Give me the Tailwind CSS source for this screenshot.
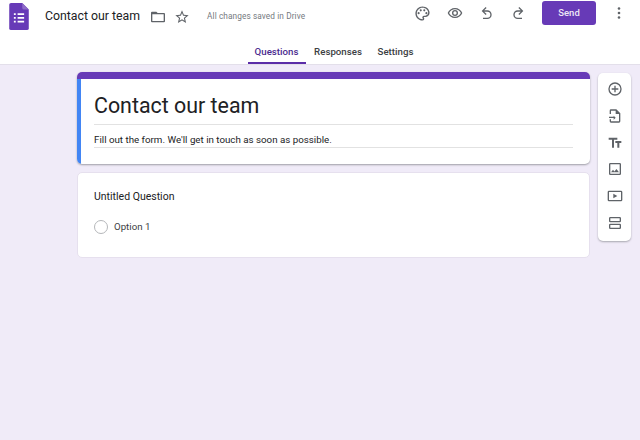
<!DOCTYPE html>
<html lang="en">
<head>
<meta charset="UTF-8">
<title>Contact our team - Google Forms</title>
<script src="https://cdn.jsdelivr.net/npm/@tailwindcss/browser@4"></script>
</head>
<body class="w-[640px] h-[440px] overflow-hidden bg-[#f0ebf8] font-['Roboto',sans-serif] text-[#202124]">
  <!-- top bar -->
  <header class="h-[65px] bg-white border-b border-[#e3dfea] flex flex-col">
    <div class="h-[40px] flex items-start">
      <div class="h-[33px] flex items-center">
        <svg class="ml-[9px] w-[20px] h-[27px]" viewBox="0 0 21 29">
          <path d="M2 0h12l7 7v20a2 2 0 0 1-2 2H2a2 2 0 0 1-2-2V2a2 2 0 0 1 2-2z" fill="#673ab7"/>
          <path d="M14 0l7 7h-5a2 2 0 0 1-2-2z" fill="#8e6cc9"/>
          <path d="M5 11h2v2H5zM9 11h7v2H9zM5 15h2v2H5zM9 15h7v2H9zM5 19h2v2H5zM9 19h7v2H9z" fill="#fff"/>
        </svg>
        <span class="ml-[16px] text-[12.3px] leading-none">Contact our team</span>
        <svg class="ml-[10px] w-[16px] h-[16px]" viewBox="0 0 24 24" fill="#5f6368"><path d="M3 4h6.500l2 2H21a1.500 1.500 0 0 1 1.500 1.500v11A1.500 1.500 0 0 1 21 20H3a1.500 1.500 0 0 1-1.500-1.500v-13A1.500 1.500 0 0 1 3 4zm.500 4v10h17V8h-17z"/></svg>
        <svg class="ml-[8px] w-[16px] h-[16px]" viewBox="0 0 24 24" fill="#5f6368"><path d="M22 9.240l-7.190-.620L12 2 9.190 8.630 2 9.240l5.460 4.730L5.820 21 12 17.270 18.180 21l-1.630-7.030L22 9.240zM12 15.400l-3.760 2.270 1-4.280-3.320-2.880 4.380-.380L12 6.100l1.710 4.040 4.380.380-3.320 2.880 1 4.280L12 15.400z"/></svg>
        <span class="ml-[17px] text-[8.25px] text-[#757a80] tracking-[0.1px]">All changes saved in Drive</span>
      </div>
      <div class="ml-auto h-[26px] flex items-center">
        <svg class="w-[17px] h-[17px]" viewBox="0 0 24 24" fill="#5f6368"><path d="M12 2C6.490 2 2 6.490 2 12s4.490 10 10 10a2.500 2.500 0 0 0 1.850-4.180.5.500 0 0 1 .370-.820H16c3.310 0 6-2.690 6-6 0-4.960-4.490-9-10-9zm4 13h-1.780a2.500 2.500 0 0 0-1.850 4.180.5.500 0 0 1-.370.820c-4.410 0-8-3.590-8-8s3.590-8 8-8 8 3.140 8 7c0 2.210-1.790 4-4 4z"/><circle cx="6.500" cy="11.500" r="1.500"/><circle cx="9.500" cy="7.500" r="1.500"/><circle cx="14.500" cy="7.500" r="1.500"/><circle cx="17.500" cy="11.500" r="1.500"/></svg>
        <svg class="ml-[16px] w-[16px] h-[16px]" viewBox="0 0 24 24" fill="#5f6368"><path d="M12 4.500C7 4.500 2.730 7.610 1 12c1.730 4.390 6 7.500 11 7.500s9.270-3.110 11-7.500c-1.730-4.390-6-7.500-11-7.500zm0 13c-3.790 0-7.170-2.130-8.820-5.500C4.830 8.630 8.210 6.500 12 6.500s7.170 2.130 8.820 5.500c-1.650 3.370-5.030 5.500-8.820 5.500zm0-10a4.500 4.500 0 1 0 0 9 4.500 4.500 0 0 0 0-9zm0 7a2.500 2.500 0 1 1 0-5 2.500 2.500 0 0 1 0 5z"/></svg>
        <svg class="ml-[16px] w-[16px] h-[16px]" viewBox="0 0 24 24" fill="#5f6368"><path d="M12.500 8H7.800l3.600-3.600L10 3 4 9l6 6 1.400-1.400L7.800 10h4.700a4.500 4.500 0 0 1 0 9H6v2h6.500a6.500 6.500 0 0 0 0-13z"/></svg>
        <svg class="ml-[15px] w-[16px] h-[16px]" viewBox="0 0 24 24" fill="#5f6368"><path d="M11.500 8h4.700l-3.600-3.600L14 3l6 6-6 6-1.400-1.400 3.600-3.600h-4.700a4.500 4.500 0 0 0 0 9H18v2h-6.500a6.500 6.500 0 0 1 0-13z"/></svg>
        <button class="ml-[16px] w-[54px] h-[24px] rounded-[3px] bg-[#673ab7] text-[#ece6f6] text-[9.5px] font-medium">Send</button>
        <svg class="ml-[21px] mr-[19px] w-[4px] h-[12px]" viewBox="0 0 4 12" fill="#5f6368"><circle cx="2" cy="1.500" r="1.300"/><circle cx="2" cy="6" r="1.300"/><circle cx="2" cy="10.500" r="1.300"/></svg>
      </div>
    </div>
    <nav class="flex-1 flex justify-center text-[9.7px] font-medium pl-[28px]">
      <a class="w-[58px] pt-[2px] flex items-center justify-center text-[#4a2a8e] border-b-2 border-[#5b2da8]">Questions</a>
      <a class="w-[65px] pt-[2px] pb-[2px] flex items-center justify-center text-[#3c4043]">Responses</a>
      <a class="w-[50px] pt-[2px] pb-[2px] flex items-center justify-center text-[#3c4043]">Settings</a>
    </nav>
  </header>

  <div class="flex items-start pt-[7px] pl-[77px]">
    <main class="w-[513px] flex flex-col gap-[8px]">
      <!-- title card -->
      <section class="h-[92px] bg-white rounded-[5px] overflow-hidden shadow-[0_1px_2px_rgba(60,64,67,0.45)] flex flex-col">
        <div class="h-[7px] bg-[#673ab7]"></div>
        <div class="flex-1 border-l-[4px] border-[#4285f4] pl-[13px] pr-[17px]">
          <h1 class="pt-[13px] text-[21.4px] leading-[28px] pb-[4px] border-b border-[#e2e2e2]">Contact our team</h1>
          <p class="pt-[8px] text-[9.75px] leading-[14px] border-b border-[#e2e2e2]">Fill out the form. We'll get in touch as soon as possible.</p>
        </div>
      </section>
      <!-- question card -->
      <section class="h-[86px] bg-white rounded-[5px] border border-[#e6e0ee] pl-[16px]">
        <h2 class="pt-[17px] text-[10.5px] leading-[14px]">Untitled Question</h2>
        <div class="mt-[16px] flex items-center">
          <span class="w-[14px] h-[14px] rounded-full border-[1.5px] border-[#b5b7ba]"></span>
          <span class="ml-[6px] text-[9.7px] text-[#3c4043]">Option 1</span>
        </div>
      </section>
    </main>

    <!-- side toolbar -->
    <aside class="ml-[8px] mt-[1px] w-[33px] h-[168px] bg-white rounded-[5px] shadow-[0_1px_2px_rgba(60,64,67,0.4)] flex flex-col items-center pt-[8px] gap-[10.8px]">
      <svg class="w-[16px] h-[16px]" viewBox="0 0 24 24" fill="#5f6368"><path d="M13 7h-2v4H7v2h4v4h2v-4h4v-2h-4V7zm-1-5a10 10 0 1 0 0 20 10 10 0 0 0 0-20zm0 18a8 8 0 1 1 0-16 8 8 0 0 1 0 16z"/></svg>
      <svg class="w-[16px] h-[16px]" viewBox="0 0 24 24" fill="#5f6368"><path d="M14 2H6a2 2 0 0 0-2 2v5h2V4h7v5h5v11H6v-3H4v3a2 2 0 0 0 2 2h12a2 2 0 0 0 2-2V8l-6-6z"/><path d="M10 11.500l3 3-3 3V15H3v-2h7v-1.500z"/></svg>
      <svg class="w-[16px] h-[16px]" viewBox="0 0 24 24" fill="#5f6368"><path d="M2.500 4v3h5v12h3V7h5V4h-13zm19 5h-9v3h3v7h3v-7h3V9z"/></svg>
      <svg class="w-[16px] h-[16px]" viewBox="0 0 24 24" fill="#5f6368"><path d="M19 5v14H5V5h14m0-2H5a2 2 0 0 0-2 2v14a2 2 0 0 0 2 2h14a2 2 0 0 0 2-2V5a2 2 0 0 0-2-2zm-4.860 8.860l-3 3.870L9 13.140 6 17h12l-3.860-5.140z"/></svg>
      <svg class="w-[16px] h-[16px]" viewBox="0 0 24 24" fill="#5f6368"><path d="M21 4H3a2 2 0 0 0-2 2v12a2 2 0 0 0 2 2h18a2 2 0 0 0 2-2V6a2 2 0 0 0-2-2zm0 14H3V6h18v12z"/><path d="M9.500 8.500v7l6-3.500z"/></svg>
      <svg class="w-[16px] h-[16px]" viewBox="0 0 24 24" fill="#5f6368"><path d="M19 13H5a2 2 0 0 0-2 2v4a2 2 0 0 0 2 2h14a2 2 0 0 0 2-2v-4a2 2 0 0 0-2-2zm0 6H5v-4h14v4zM19 3H5a2 2 0 0 0-2 2v4a2 2 0 0 0 2 2h14a2 2 0 0 0 2-2V5a2 2 0 0 0-2-2zm0 6H5V5h14v4z"/></svg>
    </aside>
  </div>
</body>
</html>
